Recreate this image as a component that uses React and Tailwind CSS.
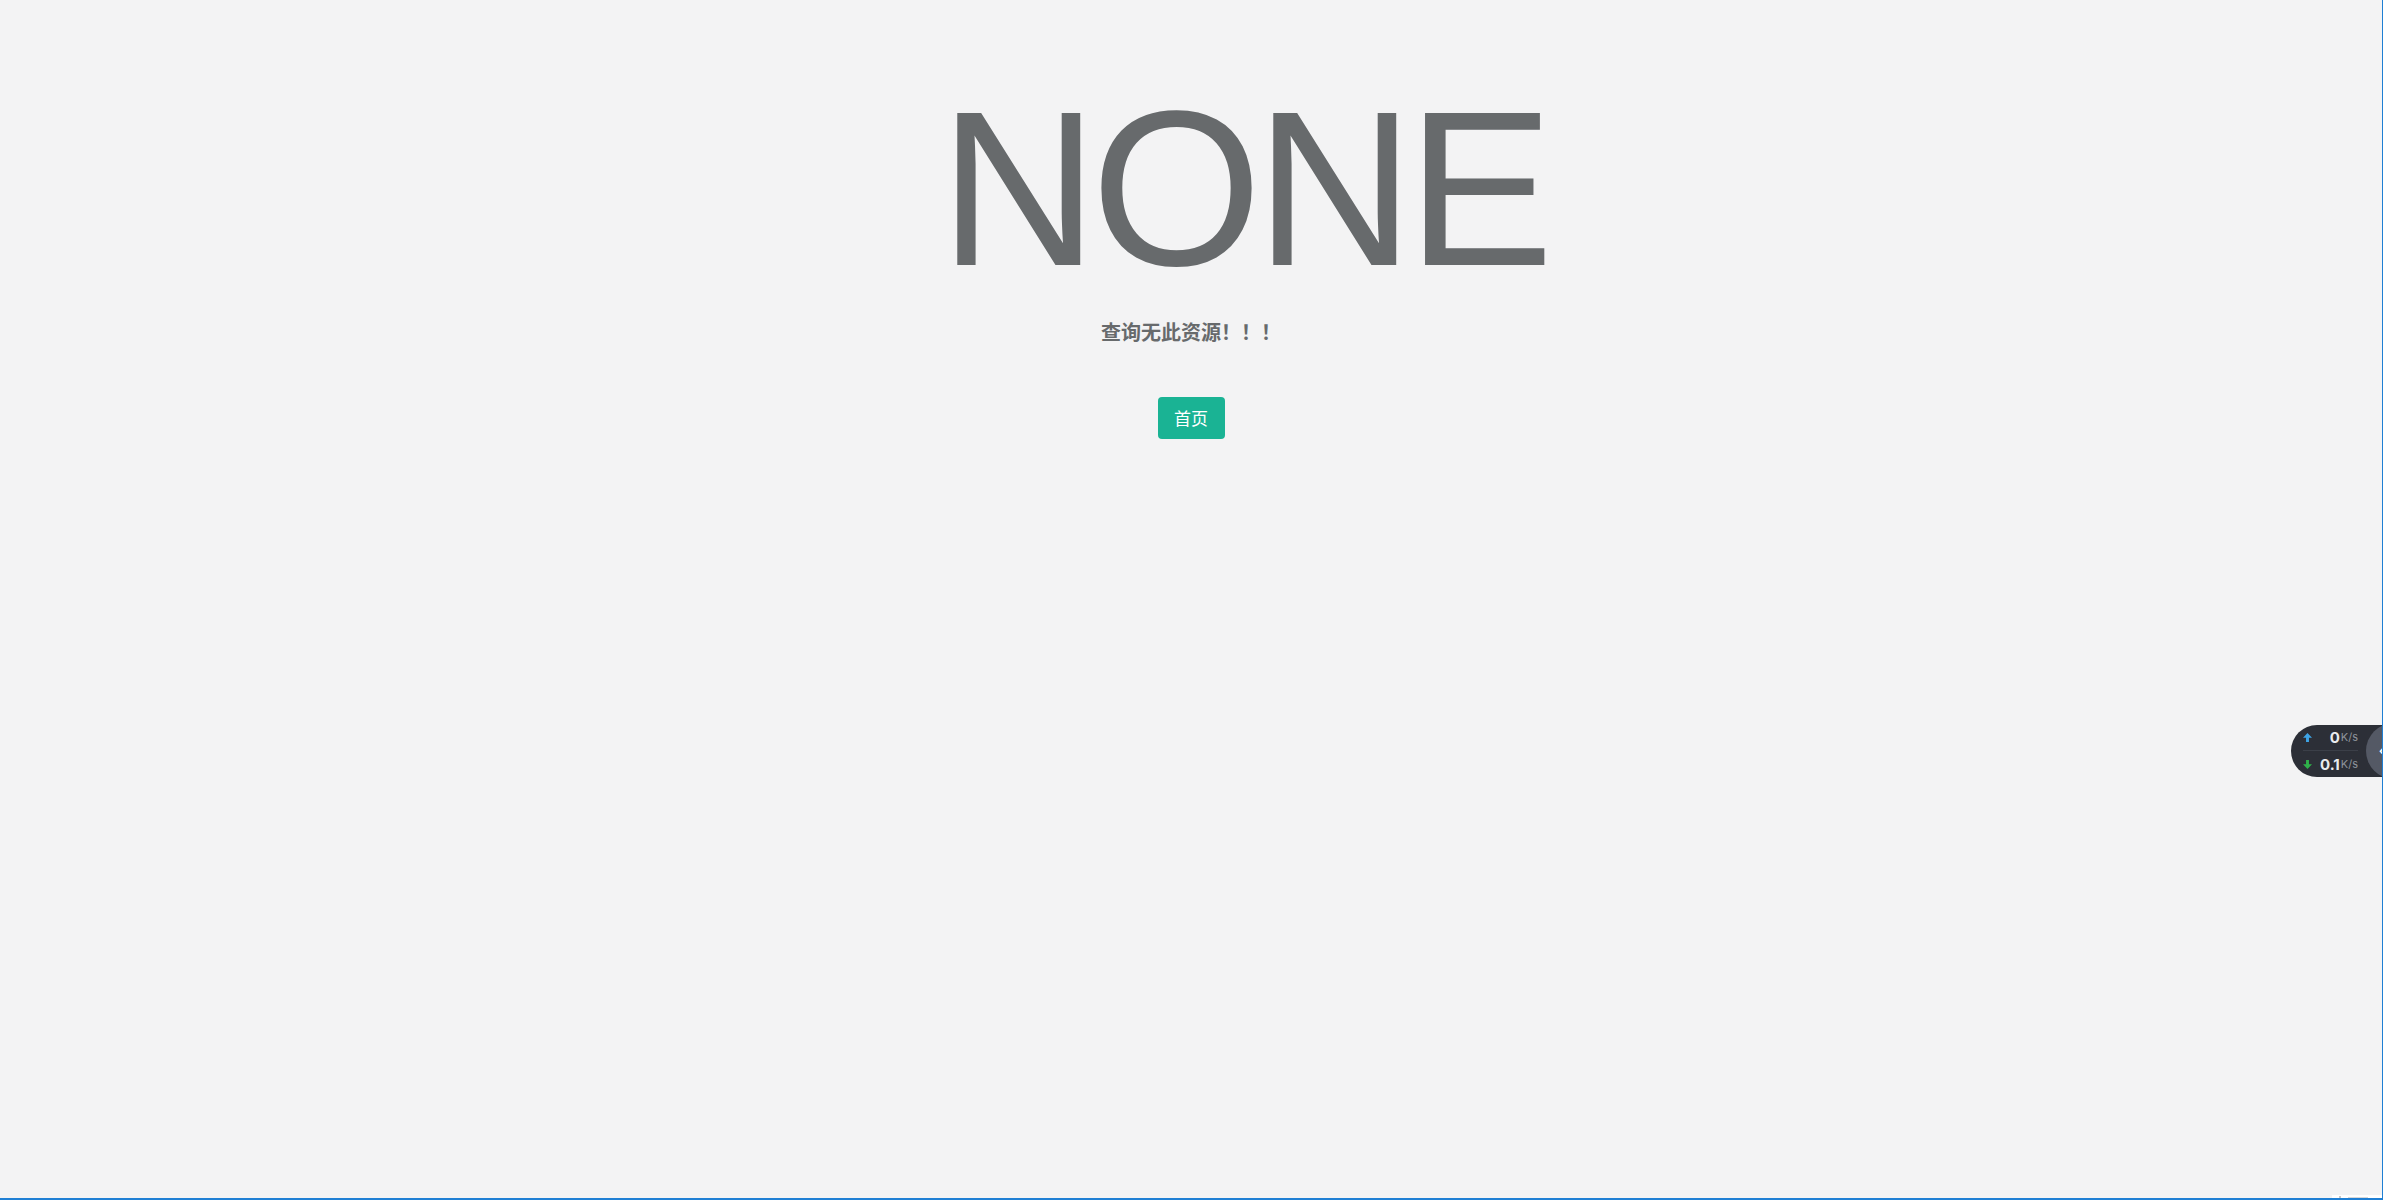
import React from 'react';

const Arrow = ({ down, color }) => (
  <svg width="9" height="9" viewBox="0 0 8 8" className={down ? 'rotate-180' : ''}>
    <path d="M4 0 L8 4.2 H5.3 V8 H2.7 V4.2 H0 Z" fill={color} />
  </svg>
);

const SpeedWidget = () => (
  <div className="absolute right-0 top-[725px] h-[52px] w-[91px]" style={{ fontFamily: 'Inter, sans-serif' }}>
    <div className="flex h-full w-full flex-col rounded-l-[26px] bg-[#2c2f37] pl-[12px] pr-[24px]">
      <div className="flex h-[26px] items-center border-b border-[#3b3f48]">
        <Arrow color="#3ea4e6" />
        <span className="ml-auto text-[15px] font-bold leading-none text-[#e9ebee]">0</span>
        <span className="ml-[1px] text-[11px] leading-none text-[#8f949c]">K/s</span>
      </div>
      <div className="flex h-[26px] items-center">
        <Arrow down color="#2fb24a" />
        <span className="ml-auto text-[15px] font-bold leading-none text-[#e9ebee]">0.1</span>
        <span className="ml-[1px] text-[11px] leading-none text-[#8f949c]">K/s</span>
      </div>
    </div>
    <div className="absolute left-[75px] top-[-2px] flex h-[56px] w-[56px] items-center rounded-full bg-[#545965] pl-[13px]">
      <span className="text-[12px] font-bold leading-none text-white">‹</span>
    </div>
  </div>
);

export default function App() {
  return (
    <div
      className="relative flex h-[1200px] w-full flex-col items-center overflow-hidden border-b-2 border-r border-[#1f7fd4] bg-[#f3f3f4]"
      style={{ fontFamily: '"Liberation Sans", "Noto Sans CJK SC", sans-serif' }}
    >
      <h1 className="mt-[79px] pl-[104px] text-[220px] font-normal leading-none tracking-[-7px] text-[#676a6c]">
        NONE
      </h1>
      <p
        className="mt-[19px] text-[20px] font-bold leading-[28px] text-[#676a6c]"
        style={{ fontFamily: '"Noto Sans CJK SC", serif' }}
      >
        查询无此资源！！！
      </p>
      <button
        className="mt-[51px] flex h-[42px] w-[67px] items-center justify-center rounded-[4px] bg-[#1ab394] text-[17px] text-white"
        style={{ fontFamily: '"Noto Sans CJK SC", sans-serif' }}
      >
        首页
      </button>

      <SpeedWidget />

      <div className="absolute bottom-[-2px] right-0 flex h-[5px] w-[50px] items-center gap-[4px] bg-white pl-[7px]">
        <div className="h-[3px] w-[2px] bg-[#c8c8c8]" />
        <div className="ml-[3px] h-[2px] w-[20px] bg-[#d8d8d8]" />
      </div>
    </div>
  );
}
